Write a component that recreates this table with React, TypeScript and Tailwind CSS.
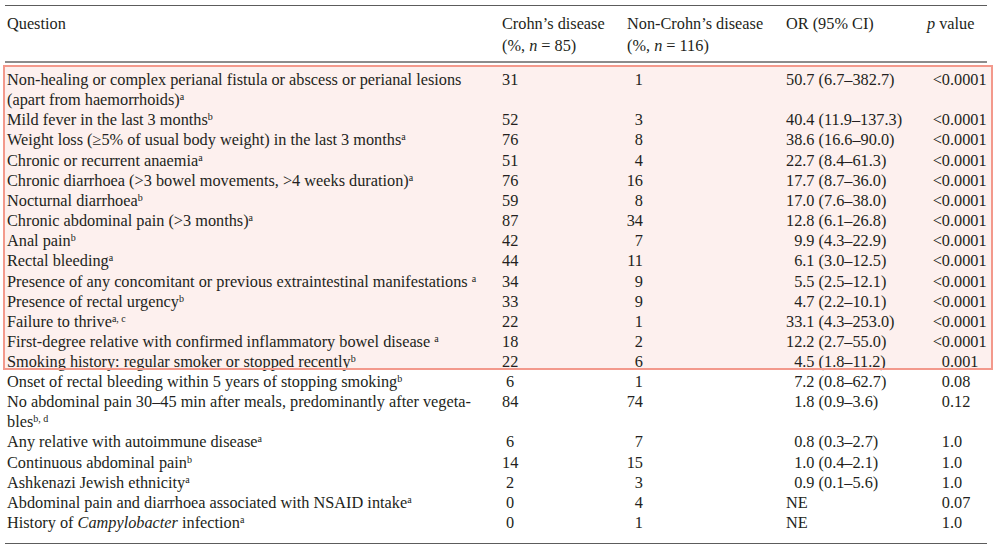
import React from 'react';

type Row = {
  q: React.ReactNode;
  c: string;
  n: string;
  or: string;
  p: string;
};

const Sup = ({ children }: { children: React.ReactNode }) => (
  <sup className="text-[10px]">{children}</sup>
);

const highlighted: Row[] = [
  {
    q: (
      <>
        Non-healing or complex perianal fistula or abscess or perianal lesions
        <br />
        (apart from haemorrhoids)<Sup>a</Sup>
      </>
    ),
    c: '31',
    n: '1',
    or: '50.7 (6.7–382.7)',
    p: '<0.0001',
  },
  { q: <>Mild fever in the last 3 months<Sup>b</Sup></>, c: '52', n: '3', or: '40.4 (11.9–137.3)', p: '<0.0001' },
  { q: <>Weight loss (≥5% of usual body weight) in the last 3 months<Sup>a</Sup></>, c: '76', n: '8', or: '38.6 (16.6–90.0)', p: '<0.0001' },
  { q: <>Chronic or recurrent anaemia<Sup>a</Sup></>, c: '51', n: '4', or: '22.7 (8.4–61.3)', p: '<0.0001' },
  { q: <>Chronic diarrhoea (&gt;3 bowel movements, &gt;4 weeks duration)<Sup>a</Sup></>, c: '76', n: '16', or: '17.7 (8.7–36.0)', p: '<0.0001' },
  { q: <>Nocturnal diarrhoea<Sup>b</Sup></>, c: '59', n: '8', or: '17.0 (7.6–38.0)', p: '<0.0001' },
  { q: <>Chronic abdominal pain (&gt;3 months)<Sup>a</Sup></>, c: '87', n: '34', or: '12.8 (6.1–26.8)', p: '<0.0001' },
  { q: <>Anal pain<Sup>b</Sup></>, c: '42', n: '7', or: '9.9 (4.3–22.9)', p: '<0.0001' },
  { q: <>Rectal bleeding<Sup>a</Sup></>, c: '44', n: '11', or: '6.1 (3.0–12.5)', p: '<0.0001' },
  { q: <>Presence of any concomitant or previous extraintestinal manifestations <Sup>a</Sup></>, c: '34', n: '9', or: '5.5 (2.5–12.1)', p: '<0.0001' },
  { q: <>Presence of rectal urgency<Sup>b</Sup></>, c: '33', n: '9', or: '4.7 (2.2–10.1)', p: '<0.0001' },
  { q: <>Failure to thrive<Sup>a, c</Sup></>, c: '22', n: '1', or: '33.1 (4.3–253.0)', p: '<0.0001' },
  { q: <>First-degree relative with confirmed inflammatory bowel disease <Sup>a</Sup></>, c: '18', n: '2', or: '12.2 (2.7–55.0)', p: '<0.0001' },
  { q: <>Smoking history: regular smoker or stopped recently<Sup>b</Sup></>, c: '22', n: '6', or: '4.5 (1.8–11.2)', p: '0.001' },
];

const others: Row[] = [
  { q: <>Onset of rectal bleeding within 5 years of stopping smoking<Sup>b</Sup></>, c: '6', n: '1', or: '7.2 (0.8–62.7)', p: '0.08' },
  {
    q: (
      <>
        No abdominal pain 30–45 min after meals, predominantly after vegeta-
        <br />
        bles<Sup>b, d</Sup>
      </>
    ),
    c: '84',
    n: '74',
    or: '1.8 (0.9–3.6)',
    p: '0.12',
  },
  { q: <>Any relative with autoimmune disease<Sup>a</Sup></>, c: '6', n: '7', or: '0.8 (0.3–2.7)', p: '1.0' },
  { q: <>Continuous abdominal pain<Sup>b</Sup></>, c: '14', n: '15', or: '1.0 (0.4–2.1)', p: '1.0' },
  { q: <>Ashkenazi Jewish ethnicity<Sup>a</Sup></>, c: '2', n: '3', or: '0.9 (0.1–5.6)', p: '1.0' },
  { q: <>Abdominal pain and diarrhoea associated with NSAID intake<Sup>a</Sup></>, c: '0', n: '4', or: 'NE', p: '0.07' },
  { q: <>History of <i>Campylobacter</i> infection<Sup>a</Sup></>, c: '0', n: '1', or: 'NE', p: '1.0' },
];

const cols = 'grid grid-cols-[495px_125px_159px_141px_62px]';

const TableRow = ({ r }: { r: Row }) => {
  const sp = r.or.indexOf(' ');
  const dot = r.p.indexOf('.');
  return (
    <div className={`${cols} leading-[20.15px]`}>
      <div className="pl-[2px]">{r.q}</div>
      <div className="pl-[2px]">
        <span className="inline-block w-[16px] text-center">{r.c}</span>
      </div>
      <div>
        <span className="inline-block w-[18px] text-right">{r.n}</span>
      </div>
      <div className="pl-[2px] whitespace-nowrap">
        {sp < 0 ? (
          r.or
        ) : (
          <>
            <span className="inline-block w-[28.5px] text-right">{r.or.slice(0, sp)}</span>
            {r.or.slice(sp)}
          </>
        )}
      </div>
      <div className="whitespace-nowrap">
        <span className="inline-block w-[25px] text-right">{r.p.slice(0, dot)}</span>
        {r.p.slice(dot)}
      </div>
    </div>
  );
};

export default function App() {
  return (
    <div className="w-[1002px] h-[551px] bg-white pt-[5px] pl-[5px] text-[16.3px] text-[#231f20] font-['Liberation_Serif',serif]">
      <div className="w-[982px] border-t border-[#5c5c5c]">
        {/* Header */}
        <div className={`${cols} leading-[22px] pt-[7px] pb-[4px] border-b-2 border-[#8c8c8c]`}>
          <div className="pl-[2px]">Question</div>
          <div className="pl-[2px]">
            Crohn’s disease
            <br />
            (%, <i>n</i> = 85)
          </div>
          <div className="pl-[2px]">
            Non-Crohn’s disease
            <br />
            (%, <i>n</i> = 116)
          </div>
          <div className="pl-[2px]">OR (95% CI)</div>
          <div className="pl-[2px]">
            <i>p</i> value
          </div>
        </div>

        {/* Highlighted rows */}
        <div className="mt-[4px] mb-[4px] h-[301px] pt-[3px] w-[986px] bg-[#fdf0ee] outline-2 outline-[#f3998c]">
          {highlighted.map((r, i) => (
            <TableRow key={i} r={r} />
          ))}
        </div>

        {others.map((r, i) => (
          <TableRow key={i} r={r} />
        ))}

        <div className="mt-[10px] border-t border-[#5c5c5c]" />
      </div>
    </div>
  );
}
